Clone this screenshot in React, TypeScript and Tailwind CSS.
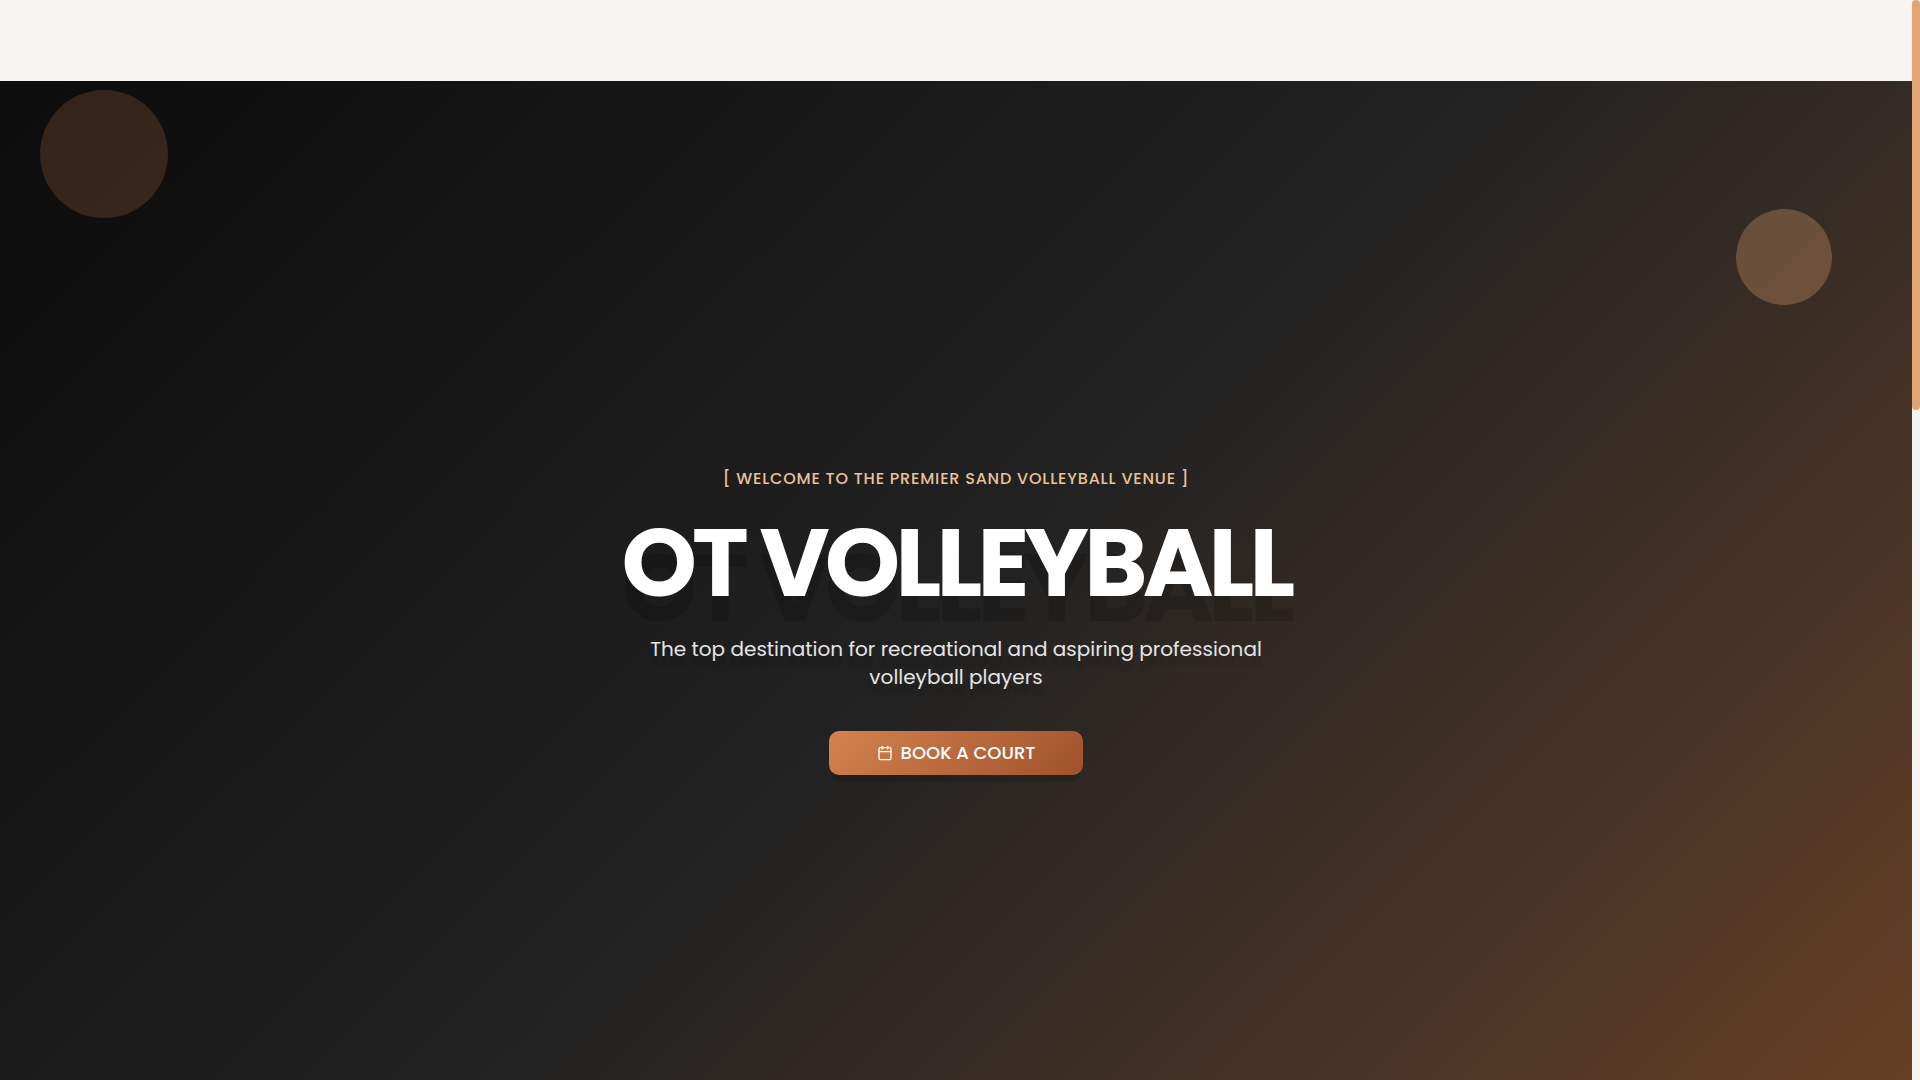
import React from "react";
import { Calendar } from "lucide-react";

const Header = () => (
  <header className="h-[81px] shrink-0 bg-[#f6f5f1]" />
);

const BookButton = () => (
  <button
    type="button"
    className="flex items-center gap-2 h-11 px-12 rounded-[10px] bg-linear-135 from-[#d4834e] to-[#a0522d] text-white text-lg font-medium uppercase shadow-[0_10px_0_-3px_rgba(0,0,0,0.1)]"
  >
    <Calendar className="size-4" strokeWidth={2} />
    Book a Court
  </button>
);

const Hero = () => (
  <section className="relative flex h-screen shrink-0 flex-col items-center justify-center bg-linear-135 from-[#0c0c0c] via-[#222222] to-[#694125] text-center">
    <div className="absolute left-10 top-[9px] size-32 rounded-full bg-[#d4834e]/20" />
    <div className="absolute right-20 top-32 size-24 rounded-full bg-[#e4a470]/30" />
    <p className="text-base font-medium uppercase tracking-wider text-[#e9c299]">
      [ Welcome to the premier sand volleyball venue ]
    </p>
    <h1 className="mt-6 text-8xl font-bold tracking-tighter text-white text-shadow-[0_25px_0_rgba(0,0,0,0.15)]">
      OT VOLLEYBALL
    </h1>
    <p className="mt-6 max-w-2xl text-xl leading-7 text-neutral-200 text-shadow-[0_10px_3px_rgba(0,0,0,0.15)]">
      The top destination for recreational and aspiring professional volleyball
      players
    </p>
    <div className="mt-10">
      <BookButton />
    </div>
  </section>
);

const ScrollBar = () => (
  <div className="w-2 shrink-0 bg-[#f5f4f0]">
    <div className="h-[38%] rounded-full bg-[#e2a473]" />
  </div>
);

const App = () => (
  <div className="flex h-screen overflow-hidden font-[Poppins,Inter,sans-serif]">
    <main className="flex flex-1 flex-col overflow-hidden">
      <Header />
      <Hero />
    </main>
    <ScrollBar />
  </div>
);

export default App;
